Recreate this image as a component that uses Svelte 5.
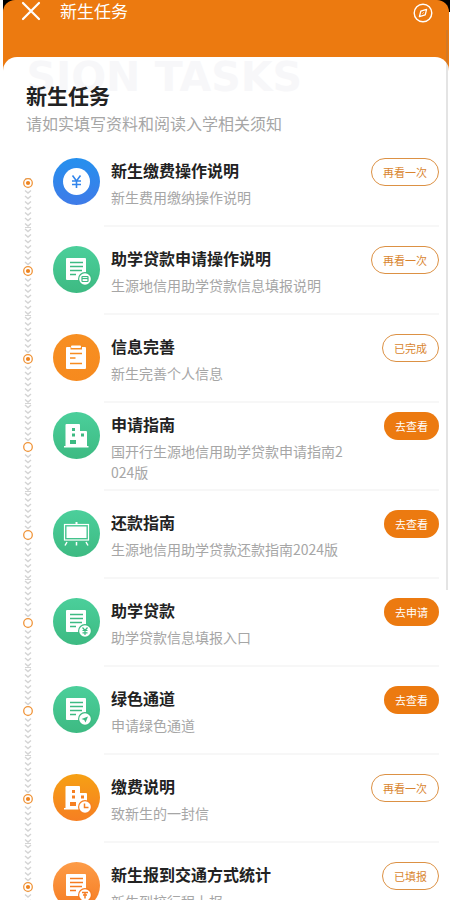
<script>
  const tasks = [
    { title: '新生缴费操作说明', desc: '新生费用缴纳操作说明', action: '再看一次', icon: 'yuan', tone: 'blue', done: true },
    { title: '助学贷款申请操作说明', desc: '生源地信用助学贷款信息填报说明', action: '再看一次', icon: 'doc', badge: 'card', tone: 'green', done: true },
    { title: '信息完善', desc: '新生完善个人信息', action: '已完成', icon: 'clipboard', tone: 'orange', done: true },
    { title: '申请指南', desc: '国开行生源地信用助学贷款申请指南2024版', action: '去查看', icon: 'building', tone: 'green', done: false },
    { title: '还款指南', desc: '生源地信用助学贷款还款指南2024版', action: '去查看', icon: 'board', tone: 'green', done: false },
    { title: '助学贷款', desc: '助学贷款信息填报入口', action: '去申请', icon: 'doc', badge: 'yuan', tone: 'green', done: false },
    { title: '绿色通道', desc: '申请绿色通道', action: '去查看', icon: 'doc', badge: 'send', tone: 'green', done: false },
    { title: '缴费说明', desc: '致新生的一封信', action: '再看一次', icon: 'building', badge: 'clock', tone: 'amber', done: true },
    { title: '新生报到交通方式统计', desc: '新生到校行程上报', action: '已填报', icon: 'doc', badge: 'text', tone: 'peach', done: true }
  ];

  const tones = {
    blue: ['#2590ee', '#3f7be8'],
    green: ['#4bcf9b', '#3dba82'],
    orange: ['#f78f22', '#f68a1e'],
    amber: ['#f6a014', '#f67f22'],
    peach: ['#fd9c48', '#f57c22']
  };

  const chevrons = Array.from({ length: 16 }, (_, i) => 2 + i * 5.5);
</script>

<div class="page">
  <div class="screen">
    <header>
      <button class="icon-button" aria-label="关闭">
        <svg width="20" height="20" viewBox="0 0 20 20"><path d="M2 2 18 18M18 2 2 18" stroke="#fff" stroke-width="2.2" stroke-linecap="round" /></svg>
      </button>
      <span class="nav-title">新生任务</span>
      <button class="icon-button compass" aria-label="浏览">
        <svg width="20" height="20" viewBox="0 0 20 20" fill="none" stroke="#fff">
          <circle cx="10" cy="10" r="8.8" stroke-width="1.4" />
          <path d="M13.6 6.4 12.2 11.8 6.4 13.6 7.8 8.2Z" stroke-width="1.3" stroke-linejoin="round" />
          <path d="m9.5 10.500 1-1" stroke-width="1" />
        </svg>
      </button>
    </header>

    <main>
      <div class="intro">
        <div class="ghost" aria-hidden="true">SION TASKS</div>
        <h1>新生任务</h1>
        <p>请如实填写资料和阅读入学相关须知</p>
      </div>

      <ul>
        {#each tasks as task, i}
          <li>
            <div class="rail">
              <svg class="track" width="10" height="88" viewBox="0 0 10 88" fill="none" stroke="#d4d4d4">
                <path d={i === 0 ? 'M2 39.5H8' : 'M2 .5H8'} stroke-width="1" />
                {#each chevrons as y}
                  {#if i > 0 || y > 38}
                    <path d="M2 {y}l3 2.6 3-2.6" stroke-width="1.4" />
                  {/if}
                {/each}
              </svg>
              <svg class="dot" width="10" height="10" viewBox="0 0 10 10">
                <circle cx="5" cy="5" r="4.3" fill="#fff" stroke="#f0953a" stroke-width="1.3" />
                {#if task.done}
                  <circle cx="5" cy="5" r="2.1" fill="#ee8420" />
                {/if}
              </svg>
            </div>
            <div class="body">
              <div class="content">
                <svg class="badge" width="47" height="47" viewBox="0 0 47 47">
                  <defs>
                    <linearGradient id="tone{i}" x1="0" y1="0" x2="0" y2="1">
                      <stop offset="0" stop-color={tones[task.tone][0]} />
                      <stop offset="1" stop-color={tones[task.tone][1]} />
                    </linearGradient>
                  </defs>
                  <circle cx="23.5" cy="23.5" r="23.5" fill="url(#tone{i})" />
                  {#if task.icon === 'yuan'}
                    <circle cx="23.5" cy="23.5" r="13.5" fill="#fff" />
                    <path d="M19.5 17.5 23.5 23 27.5 17.5M23.5 23V30M19 23H28M19 26.5H28" fill="none" stroke="#3185ec" stroke-width="1.6" />
                  {:else if task.icon === 'doc'}
                    <rect x="13" y="12" width="20" height="22" rx="1" fill="#fff" />
                    <path d="M17 16.5H30M17 20.5H30M17 24.5H29M17 28.5H23" stroke={tones[task.tone][1]} stroke-width="1.4" />
                  {:else if task.icon === 'clipboard'}
                    <path d="M14 13H17.500V15.500H29V13H32Q33 13 33 14V34Q33 35 32 35H14Q13 35 13 34V14Q13 13 14 13Z" fill="#fff" />
                    <rect x="18" y="11.5" width="10" height="2.5" rx="1" fill="#fff" />
                    <path d="M17 19.5H29M17 24H22.500M17 29.500H29" stroke="#f78c20" stroke-width="1.6" />
                  {:else if task.icon === 'building'}
                    <path d="M12.5 34V13Q12.5 12 13.5 12H26Q27 12 27 13V19H33Q34 19 34 20V34H35.5V35.5H11V34Z" fill="#fff" />
                    <path d="M19 16H22V19H19ZM19 21.5H22V24.5H19ZM28 21.5H31V24.5H28ZM17 28H23V32H17Z" fill={tones[task.tone][1]} />
                  {:else if task.icon === 'board'}
                    <path d="M22.5 12H24.5V15H22.5Z" fill="#fff" />
                    <rect x="11.5" y="14.500" width="24" height="15.500" fill="none" stroke="#fff" stroke-width="1.2" />
                    <rect x="13.500" y="16.500" width="20" height="11.500" fill="#fff" />
                    <path d="M14 32 12 35.5M23.5 32V35.5M33 32 35 35.5" stroke="#fff" stroke-width="1.5" />
                  {/if}
                  {#if task.badge}
                    <circle cx="32" cy="33" r="7" fill={tones[task.tone][1]} />
                    <circle cx="32" cy="33" r="5.8" fill="#fff" />
                    <g fill="none" stroke={tones[task.tone][1]} stroke-width="1.2">
                      {#if task.badge === 'card'}
                        <rect x="29" y="30.5" width="6" height="5" rx=".5" /><path d="M29 32.5H35" />
                      {:else if task.badge === 'yuan'}
                        <path d="M29.5 29.5 32 32.5 34.5 29.5M32 32.5V37M29.5 32.5H34.5M29.5 34.8H34.5" />
                      {:else if task.badge === 'send'}
                        <path d="M35 30.5 28.5 33 31.2 34 32.5 36.5Z" fill={tones[task.tone][1]} stroke="none" />
                      {:else if task.badge === 'clock'}
                        <path d="M31.5 29.5V33.5H35.5" stroke-width="1.5" />
                      {:else if task.badge === 'text'}
                        <path d="M29 30.5H35M32 31V36.5M30 33H34" stroke-width="1.5" />
                      {/if}
                    </g>
                  {/if}
                </svg>
                <div class="text">
                  <h2>{task.title}</h2>
                  <p>{task.desc}</p>
                </div>
                <div class="action">
                  <button class="pill" class:outline={task.done}>{task.action}</button>
                </div>
              </div>
            </div>
          </li>
        {/each}
      </ul>
    </main>
    <div class="scroll-thumb"></div>
  </div>
</div>

<style>
  :global(body) {
    margin: 0;
    background: #fff;
  }
  .page {
    height: 100vh;
    overflow-y: auto;
    scrollbar-width: none;
    padding: 0 1px 0 3px;
    box-sizing: border-box;
    font-family: 'Noto Sans CJK SC', sans-serif;
    background: linear-gradient(#000, #000) 3px 0 / 100% 12px no-repeat #fff;
  }
  .screen {
    position: relative;
    background: #ec7a10;
    border-radius: 12px 12px 0 0;
  }
  header {
    display: flex;
    align-items: flex-start;
    height: 57px;
    padding: 0 16px 0 18px;
    box-sizing: border-box;
    color: #fff;
  }
  button {
    font-family: inherit;
    border: 0;
    margin: 0;
    cursor: pointer;
  }
  .icon-button {
    display: block;
    padding: 1px 0 0;
    background: none;
    line-height: 0;
  }
  .compass {
    margin-left: auto;
    padding-top: 3px;
  }
  .nav-title {
    margin-left: 19px;
    font-size: 17px;
    line-height: 22px;
  }
  main {
    background: #fff;
    border-radius: 14px 14px 0 0;
  }
  .intro {
    position: relative;
    padding: 23px 23px 3px;
  }
  .ghost {
    position: absolute;
    top: 0;
    left: 23px;
    width: 276px;
    display: flex;
    justify-content: flex-end;
    overflow: hidden;
    white-space: nowrap;
    font: bold 41px/40px 'DejaVu Sans', sans-serif;
    color: #f7f7f9;
  }
  h1 {
    position: relative;
    margin: 0;
    font-size: 21px;
    line-height: 30px;
    color: #222;
  }
  .intro p {
    margin: 0;
    font-size: 16px;
    line-height: 26px;
    color: #a6a6a6;
  }
  ul {
    list-style: none;
    margin: 0;
    padding: 0 10px 0 20px;
  }
  li {
    display: flex;
    min-height: 88px;
  }
  .rail {
    position: relative;
    width: 10px;
    flex: none;
    display: flex;
    align-items: center;
  }
  .track {
    position: absolute;
    inset: 0;
  }
  .dot {
    position: relative;
  }
  .body {
    flex: 1;
    min-width: 0;
    margin-left: 20px;
    display: flex;
    align-items: center;
    background: linear-gradient(#f7f7f7, #f7f7f7) right bottom / calc(100% - 51px) 2px no-repeat;
  }
  .content {
    flex: 1;
    min-width: 0;
    display: flex;
    align-items: flex-start;
  }
  .badge {
    flex: none;
  }
  .text {
    flex: 1;
    min-width: 0;
    margin-left: 11px;
  }
  h2 {
    margin: 0 0 5px;
    font-size: 16px;
    line-height: 24px;
    color: #222;
    white-space: nowrap;
  }
  .text p {
    margin: 0;
    font-size: 14px;
    line-height: 21px;
    color: #a6a6a6;
    word-break: break-all;
  }
  .action {
    min-width: 80px;
    margin-left: 12px;
    display: flex;
    justify-content: flex-end;
  }
  .pill {
    height: 28px;
    padding: 0 11px;
    border-radius: 14px;
    background: #ec7a10;
    color: #fff;
    font-size: 11px;
    line-height: 26px;
    white-space: nowrap;
  }
  .pill.outline {
    border: 1px solid #dc9144;
    background: #fff;
    color: #d98530;
  }
  .scroll-thumb {
    position: absolute;
    top: 30px;
    right: 1px;
    width: 2px;
    height: 560px;
    background: rgba(120, 120, 120, 0.2);
  }
</style>
